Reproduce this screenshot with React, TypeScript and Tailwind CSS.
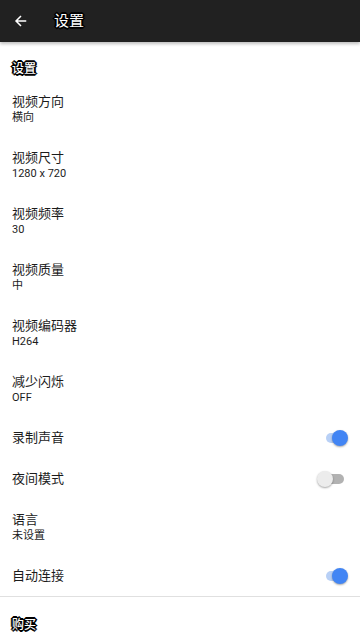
import React from 'react';

const outline =
  '[text-shadow:1px_0_0_#000,-1px_0_0_#000,0_1px_0_#000,0_-1px_0_#000,1px_1px_0_#000,-1px_-1px_0_#000,1px_-1px_0_#000,-1px_1px_0_#000,2px_0_0_#000,-2px_0_0_#000,0_2px_0_#000,0_-2px_0_#000]';

const Toggle: React.FC<{ on: boolean }> = ({ on }) => (
  <div className="relative w-[24px] h-[16px] mr-[1px]">
    <div
      className={`absolute left-[3px] right-[3px] top-[3px] h-[10px] rounded-full ${on ? 'bg-[#b8d0f6]' : 'bg-[#b2b2b2]'}`}
    />
    <div
      className={`absolute top-0 w-[16px] h-[16px] rounded-full shadow-[0_1px_2px_rgba(0,0,0,0.35)] ${on ? 'right-[-1px] bg-[#4285f4]' : 'left-[-6px] bg-[#ececec]'}`}
    />
  </div>
);

const Item: React.FC<{ title: string; sub?: string; toggle?: boolean }> = ({ title, sub, toggle }) => (
  <div className={`flex items-center justify-between px-3 ${sub ? 'h-[56px] pt-[2px]' : 'h-[41px]'}`}>
    <div className="flex flex-col">
      <span className="text-[13px] leading-[16px] text-[#1c1c1c]">{title}</span>
      {sub && <span className="text-[11px] leading-[16px] text-[#1c1c1c]">{sub}</span>}
    </div>
    {toggle !== undefined && <Toggle on={toggle} />}
  </div>
);

export default function App() {
  return (
    <div className="w-[360px] h-[640px] bg-white overflow-hidden font-['Roboto','Noto_Sans_CJK_SC',sans-serif]">
      <header className="h-[42px] bg-[#212121] flex items-center shadow-[0_2px_3px_rgba(0,0,0,0.25)] relative z-10">
        <svg className="ml-[14px] w-[14px] h-[14px]" viewBox="0 0 24 24" fill="none" stroke="#fff" strokeWidth="2.6">
          <path d="M21 12H4M12 3.5L3.5 12 12 20.5" />
        </svg>
        <h1 className={`ml-[26px] text-[15px] text-white ${outline}`}>设置</h1>
      </header>

      <div className="h-[39px] flex items-end px-3 pb-[4px]">
        <span className={`text-[12px] leading-[16px] text-white font-medium ${outline}`}>设置</span>
      </div>

      <Item title="视频方向" sub="横向" />
      <Item title="视频尺寸" sub="1280 x 720" />
      <Item title="视频频率" sub="30" />
      <Item title="视频质量" sub="中" />
      <Item title="视频编码器" sub="H264" />
      <Item title="减少闪烁" sub="OFF" />
      <Item title="录制声音" toggle={true} />
      <Item title="夜间模式" toggle={false} />
      <Item title="语言" sub="未设置" />
      <Item title="自动连接" toggle={true} />

      <div className="h-px bg-[#e0e0e0]" />

      <div className="h-[36px] flex items-end px-3">
        <span className={`text-[12px] leading-[16px] text-white font-medium ${outline}`}>购买</span>
      </div>
    </div>
  );
}
